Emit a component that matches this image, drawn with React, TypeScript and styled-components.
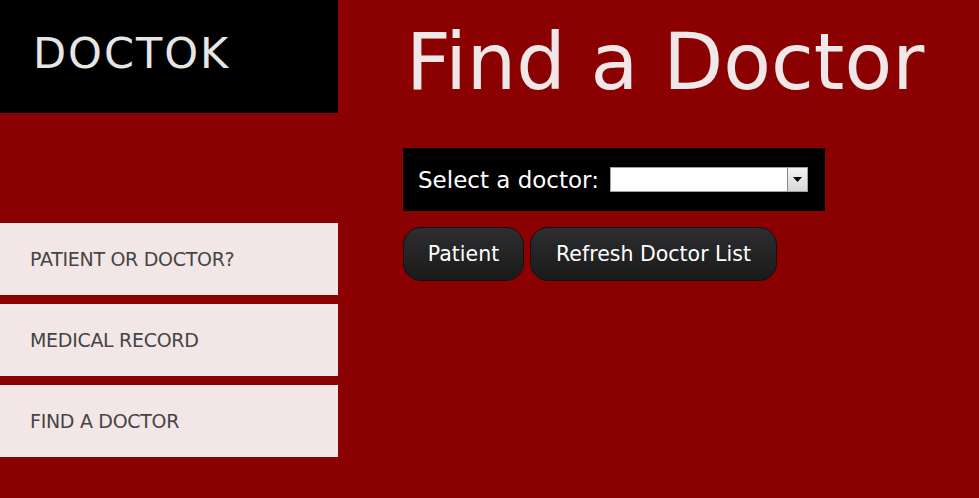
import React from "react";
import styled, { createGlobalStyle } from "styled-components";

const Global = createGlobalStyle`
  html, body { margin: 0; padding: 0; background: #8b0000; }
  body { font-family: "DejaVu Sans", "Liberation Sans", sans-serif; }
  * { box-sizing: border-box; }
`;

const Page = styled.div`
  display: flex;
  width: 979px;
  height: 498px;
  background: #8b0000;
  overflow: hidden;
`;

const Sidebar = styled.aside`
  width: 338px;
  flex: none;
  display: flex;
  flex-direction: column;
`;

const Logo = styled.div`
  height: 113px;
  background: #000;
  color: #e6e6e6;
  font-size: 43px;
  letter-spacing: 2px;
  padding: 32px 0 0 33px;
  line-height: 1;
`;

const Nav = styled.nav`
  margin-top: 110px;
  display: flex;
  flex-direction: column;
  gap: 9px;
`;

const NavItem = styled.a`
  height: 72px;
  display: flex;
  align-items: center;
  padding-left: 30px;
  background: #f2e6e6;
  color: #454545;
  font-size: 19px;
  text-decoration: none;
  letter-spacing: -0.3px;
`;

const Main = styled.main`
  flex: 1;
  padding-left: 65px;
  display: flex;
  flex-direction: column;
  align-items: flex-start;
`;

const Title = styled.h1`
  margin: 14px 0 0 3px;
  font-weight: normal;
  font-size: 78px;
  line-height: 96px;
  color: #f0e8e8;
`;

const SelectBox = styled.div`
  margin-top: 38px;
  width: 422px;
  height: 63px;
  background: #000;
  display: flex;
  align-items: center;
  padding-left: 15px;
  gap: 11px;
`;

const Label = styled.label`
  color: #fff;
  font-size: 23px;
`;

const Select = styled.div`
  width: 198px;
  height: 25px;
  background: #fff;
  border: 1px solid #a0a0a0;
  display: flex;
  justify-content: flex-end;
`;

const Arrow = styled.div`
  width: 20px;
  height: 23px;
  border-left: 1px solid #888;
  background: linear-gradient(#f4f4f4, #d8d8d8);
  display: flex;
  align-items: center;
  justify-content: center;
`;

const Buttons = styled.div`
  margin-top: 16px;
  display: flex;
  gap: 6px;
`;

const Button = styled.button<{ $w: number }>`
  width: ${(p) => p.$w}px;
  height: 54px;
  border-radius: 18px;
  border: 1px solid #111;
  background: linear-gradient(#2e2e30, #1a1a1b);
  color: #fff;
  font-family: inherit;
  font-size: 20.5px;
  cursor: pointer;
`;

export default function App() {
  return (
    <Page>
      <Global />
      <Sidebar>
        <Logo>DOCTOK</Logo>
        <Nav>
          <NavItem>PATIENT OR DOCTOR?</NavItem>
          <NavItem>MEDICAL RECORD</NavItem>
          <NavItem>FIND A DOCTOR</NavItem>
        </Nav>
      </Sidebar>
      <Main>
        <Title>Find a Doctor</Title>
        <SelectBox>
          <Label>Select a doctor:</Label>
          <Select>
            <Arrow>
              <svg width="9" height="5" viewBox="0 0 9 5">
                <path d="M0 0h9L4.5 5z" fill="#000" />
              </svg>
            </Arrow>
          </Select>
        </SelectBox>
        <Buttons>
          <Button $w={121}>Patient</Button>
          <Button $w={247}>Refresh Doctor List</Button>
        </Buttons>
      </Main>
    </Page>
  );
}
